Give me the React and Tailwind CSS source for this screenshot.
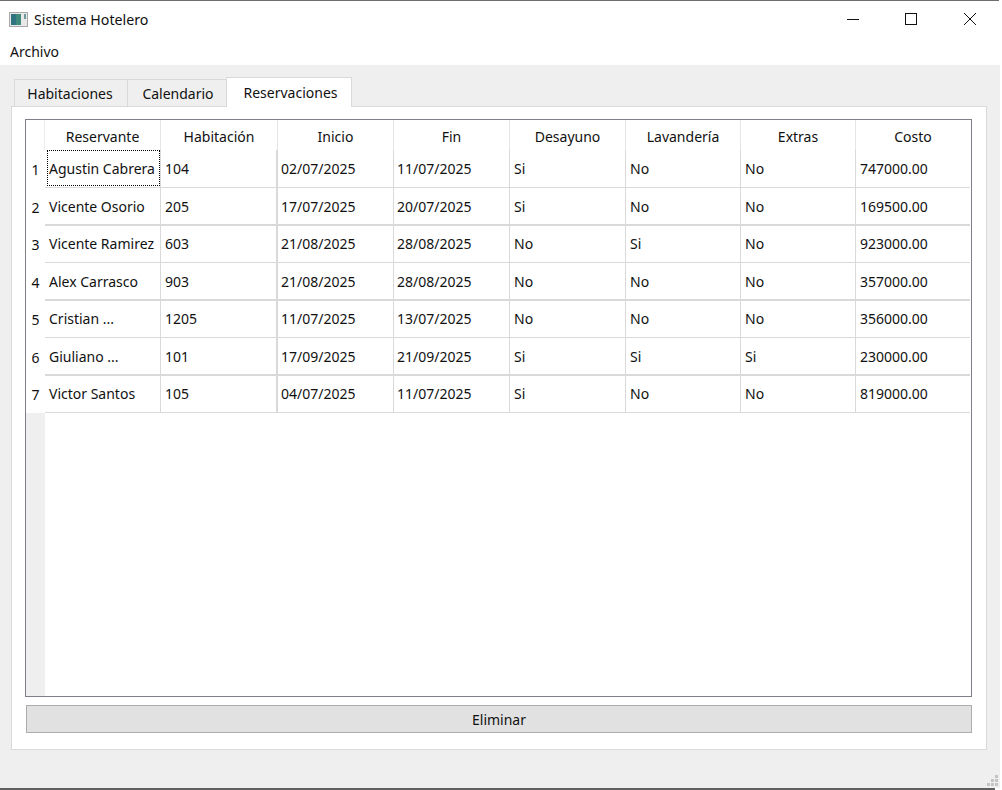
import React from 'react';

const COLUMNS = [
  { name: 'Reservante', w: 'w-[116px]' },
  { name: 'Habitación', w: 'w-[117px]' },
  { name: 'Inicio', w: 'w-[116px]' },
  { name: 'Fin', w: 'w-[116px]' },
  { name: 'Desayuno', w: 'w-[116px]' },
  { name: 'Lavandería', w: 'w-[115px]' },
  { name: 'Extras', w: 'w-[115px]' },
  { name: 'Costo', w: 'w-[114px]' },
];

const ROWS = [
  { h: 'h-[38px]', thick: false, cells: ['Agustin Cabrera', '104', '02/07/2025', '11/07/2025', 'Si', 'No', 'No', '747000.00'] },
  { h: 'h-[38px]', thick: true, cells: ['Vicente Osorio', '205', '17/07/2025', '20/07/2025', 'Si', 'No', 'No', '169500.00'] },
  { h: 'h-[37px]', thick: false, cells: ['Vicente Ramirez', '603', '21/08/2025', '28/08/2025', 'No', 'Si', 'No', '923000.00'] },
  { h: 'h-[38px]', thick: true, cells: ['Alex Carrasco', '903', '21/08/2025', '28/08/2025', 'No', 'No', 'No', '357000.00'] },
  { h: 'h-[37px]', thick: false, cells: ['Cristian ...', '1205', '11/07/2025', '13/07/2025', 'No', 'No', 'No', '356000.00'] },
  { h: 'h-[38px]', thick: true, cells: ['Giuliano ...', '101', '17/09/2025', '21/09/2025', 'Si', 'Si', 'Si', '230000.00'] },
  { h: 'h-[37px]', thick: false, cells: ['Victor Santos', '105', '04/07/2025', '11/07/2025', 'Si', 'No', 'No', '819000.00'] },
];

function WindowButtons() {
  return (
    <div className="flex items-center h-full pt-[6px]">
      <svg width="14" height="14" viewBox="0 0 14 14" className="mr-[44px]">
        <path d="M1 6.5H13" stroke="#111" strokeWidth="1" />
      </svg>
      <svg width="14" height="14" viewBox="0 0 14 14" className="mr-[45px]">
        <rect x="1.5" y="0.5" width="11" height="11" fill="none" stroke="#111" strokeWidth="1" />
      </svg>
      <svg width="14" height="14" viewBox="0 0 14 14" className="mr-[22px]">
        <path d="M1 0L13 12M13 0L1 12" stroke="#111" strokeWidth="1" />
      </svg>
    </div>
  );
}

function AppIcon() {
  return (
    <svg width="19" height="15" viewBox="0 0 19 15">
      <rect x="0.5" y="0.5" width="18" height="14" fill="#e8e8e8" stroke="#a8a8a8" />
      <rect x="2" y="2" width="10" height="11" fill="#3f8a7c" />
      <rect x="2" y="2" width="5" height="11" fill="#2f7480" />
      <rect x="15" y="2" width="2" height="5" fill="#6f9aa0" />
    </svg>
  );
}

function Table() {
  return (
    <div className="h-[578px] border border-[#7f7f87] flex flex-col">
      {/* header */}
      <div className="flex h-[30px] shrink-0">
        <div className="w-[19px] shrink-0 border-r border-[#ececec]" />
        {COLUMNS.map(c => (
          <div key={c.name} className={`${c.w} shrink-0 border-r border-[#e6e6e6] flex items-center justify-center pt-[2px] last:border-r-0`}>
            {c.name}
          </div>
        ))}
      </div>

      {ROWS.map((r, i) => (
        <div key={i} className={`flex ${r.h} shrink-0`}>
          <div className="w-[19px] shrink-0 flex items-center justify-center">{i + 1}</div>
          {r.cells.map((cell, j) => (
            <div
              key={j}
              className={`${COLUMNS[j].w} shrink-0 flex items-center whitespace-nowrap
                ${r.thick ? 'border-b-2' : 'border-b pb-[1px]'} border-[#d9d9d9]
                ${j === 1 ? 'border-r-2' : j === 7 ? '' : 'border-r'}
                ${j === 2 || j === 3 ? 'pl-[3px]' : 'pl-[4px]'}`}
            >
              {i === 0 && j === 0 ? (
                <span className="ml-[-2px] pl-[1px] w-[113px] h-[36px] flex items-center border border-dotted border-black">{cell}</span>
              ) : cell}
            </div>
          ))}
        </div>
      ))}

      <div className="flex flex-1">
        <div className="w-[19px] bg-[#efefef]" />
      </div>
    </div>
  );
}

export default function App() {
  return (
    <div className="w-[1002px] h-[790px] bg-white flex flex-col overflow-hidden text-[14px] text-[#111] font-['Noto_Sans','Open_Sans',sans-serif]">
      {/* title bar */}
      <div className="h-[33px] shrink-0 mr-[3px] border-t-[1px] border-[#6e6e6e] flex items-center pl-[9px] justify-between">
        <div className="flex items-center gap-[6px] pt-[5px]">
          <AppIcon />
          <span className="text-[14.2px]">Sistema Hotelero</span>
        </div>
        <WindowButtons />
      </div>

      {/* menu */}
      <div className="h-[32px] shrink-0 flex items-center pl-[10px] pt-[4px]">Archivo</div>

      {/* body */}
      <div className="flex-1 mr-[2px] bg-[#efefef] flex flex-col pt-[12px] pl-[11px] pr-[13px] relative">
        {/* tabs */}
        <div className="flex items-end pl-[3px] h-[30px] shrink-0 relative z-10 mb-[-1px]">
          <div className="w-[114px] h-[28px] border border-b-0 border-[#d9d9d9] flex items-center justify-center pr-[2px]">Habitaciones</div>
          <div className="w-[99px] h-[28px] border border-b-0 border-l-0 border-[#d9d9d9] flex items-center justify-center pl-[2px]">Calendario</div>
          <div className="w-[126px] h-[30px] border border-b-0 border-[#d9d9d9] bg-white flex items-center justify-center ml-[-1px] pl-[3px]">Reservaciones</div>
        </div>

        {/* pane */}
        <div className="h-[644px] shrink-0 bg-white border border-[#d9d9d9] pl-[13px] pr-[14px] pt-[12px]">
          <Table />
          <div className="mt-[8px] h-[28px] ml-[1px] bg-[#e1e1e1] border border-[#adadad] flex items-center justify-center">Eliminar</div>
        </div>

        {/* resize grip */}
        <svg width="12" height="12" viewBox="0 0 12 12" className="absolute right-[2px] bottom-[1px]">
          <g fill="#c4c4c4">
            <rect x="9" y="0" width="3" height="3" />
            <rect x="5" y="4" width="3" height="3" />
            <rect x="9" y="4" width="3" height="3" />
            <rect x="1" y="8" width="3" height="3" />
            <rect x="5" y="8" width="3" height="3" />
            <rect x="9" y="8" width="3" height="3" />
          </g>
        </svg>
      </div>

      {/* window bottom edge */}
      <div className="h-[2px] shrink-0 mr-[7px] bg-[#5f5f5f]" />
    </div>
  );
}
